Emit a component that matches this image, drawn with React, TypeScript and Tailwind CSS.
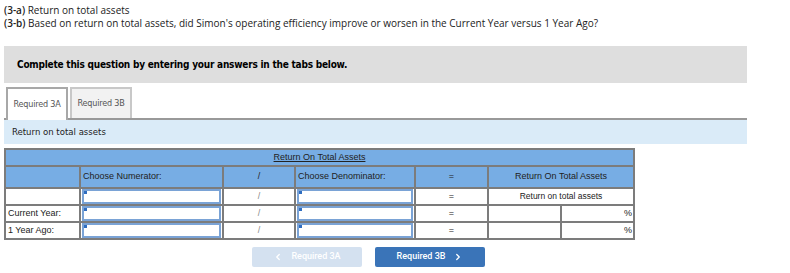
import { ChevronLeft, ChevronRight } from "lucide-react";

const cell = "border-2 border-[#7c7c7c] h-[17px] p-0";

function AnswerBox() {
  return (
    <div className="relative h-[15px] mx-[1px] border-2 border-[#7aa3d6] bg-white">
      <span className="absolute left-0 top-0 w-[3px] h-[3px] bg-[#2f6dc0]" />
    </div>
  );
}

export default function App() {
  return (
    <div className="w-[790px] h-[273px] bg-white text-[#222] font-['Open_Sans',sans-serif] overflow-hidden">
      <div className="pl-[4px] pt-[4px] text-[10px] leading-[13px]">
        <p>
          <span className="font-semibold">(3-a)</span> Return on total assets
        </p>
        <p>
          <span className="font-semibold">(3-b)</span> Based on return on total assets, did Simon's operating efficiency improve or worsen in the Current Year versus 1 Year Ago?
        </p>
      </div>

      <div className="mt-[16px] ml-[4px] w-[743px] h-[37px] bg-[#dedede] flex items-center pl-[13px]">
        <span className="font-['DejaVu_Sans_Condensed','DejaVu_Sans',sans-serif] font-bold text-[10px] text-black tracking-[-0.22px]">
          Complete this question by entering your answers in the tabs below.
        </span>
      </div>

      {/* tabs */}
      <div className="ml-[4px] w-[743px] mt-[4px] flex items-end gap-[2px] pl-[2px] border-b-2 border-[#999]">
        <div className="w-[62px] h-[33px] -mb-[2px] border-2 border-b-0 border-[#a8a8a8] bg-white flex items-center justify-center text-[9px] text-[#555] font-['DejaVu_Sans_Condensed',sans-serif] tracking-[-0.2px]">
          Required 3A
        </div>
        <div className="w-[62px] h-[31px] border-2 border-b-0 border-[#c8c8c8] bg-[#f2f2f2] flex items-center justify-center text-[9px] text-[#555] font-['DejaVu_Sans_Condensed',sans-serif] tracking-[-0.2px]">
          Required 3B
        </div>
      </div>
      <div className="ml-[4px] w-[743px] h-[24px] bg-[#daebf8] flex items-center pl-[8px] text-[9.5px] text-[#222] font-['DejaVu_Sans_Condensed',sans-serif]">
        Return on total assets
      </div>

      {/* ratio table */}
      <table className="mt-[4px] ml-[4px] border-collapse text-[9px] font-['Liberation_Sans',sans-serif] text-[#222] table-fixed">
        <colgroup>
          <col className="w-[75px]" />
          <col className="w-[143px]" />
          <col className="w-[72px]" />
          <col className="w-[120px]" />
          <col className="w-[73px]" />
          <col className="w-[73px]" />
          <col className="w-[73px]" />
        </colgroup>
        <tbody>
          <tr className="bg-[#77ade4]">
            <td colSpan={7} className={`${cell} text-center`}>
              <span className="underline">Return On Total Assets</span>
            </td>
          </tr>
          <tr className="bg-[#77ade4]">
            <td className={`${cell} h-[22px]`} />
            <td className={`${cell} h-[22px] pl-[2px]`}>Choose Numerator:</td>
            <td className={`${cell} h-[22px] text-center`}>/</td>
            <td className={`${cell} h-[22px] pl-[2px]`}>Choose Denominator:</td>
            <td className={`${cell} h-[22px] text-center`}>=</td>
            <td colSpan={2} className={`${cell} h-[22px] text-center`}>Return On Total Assets</td>
          </tr>
          <tr>
            <td className={cell} />
            <td className={cell}><AnswerBox /></td>
            <td className={`${cell} text-center text-[#888]`}>/</td>
            <td className={cell}><AnswerBox /></td>
            <td className={`${cell} text-center`}>=</td>
            <td colSpan={2} className={`${cell} text-center text-[8.5px]`}>Return on total assets</td>
          </tr>
          {["Current Year:", "1 Year Ago:"].map((label) => (
            <tr key={label}>
              <td className={`${cell} pl-[2px]`}>{label}</td>
              <td className={cell}><AnswerBox /></td>
              <td className={`${cell} text-center text-[#888]`}>/</td>
              <td className={cell}><AnswerBox /></td>
              <td className={`${cell} text-center`}>=</td>
              <td className={cell} />
              <td className={`${cell} text-right pr-[1px]`}>%</td>
            </tr>
          ))}
        </tbody>
      </table>

      {/* tab navigation */}
      <div className="mt-[7px] ml-[252px] flex gap-[13px] font-['Roboto',sans-serif] font-medium text-[9px] text-white">
        <div className="w-[110px] h-[20px] rounded-[2px] bg-[#d4e1f0] flex items-center justify-center gap-[8px]">
          <ChevronLeft size={10} strokeWidth={3} />
          Required 3A
        </div>
        <div className="w-[110px] h-[20px] rounded-[2px] bg-[#3a74b8] flex items-center justify-center gap-[8px]">
          Required 3B
          <ChevronRight size={10} strokeWidth={3} />
        </div>
      </div>
    </div>
  );
}
